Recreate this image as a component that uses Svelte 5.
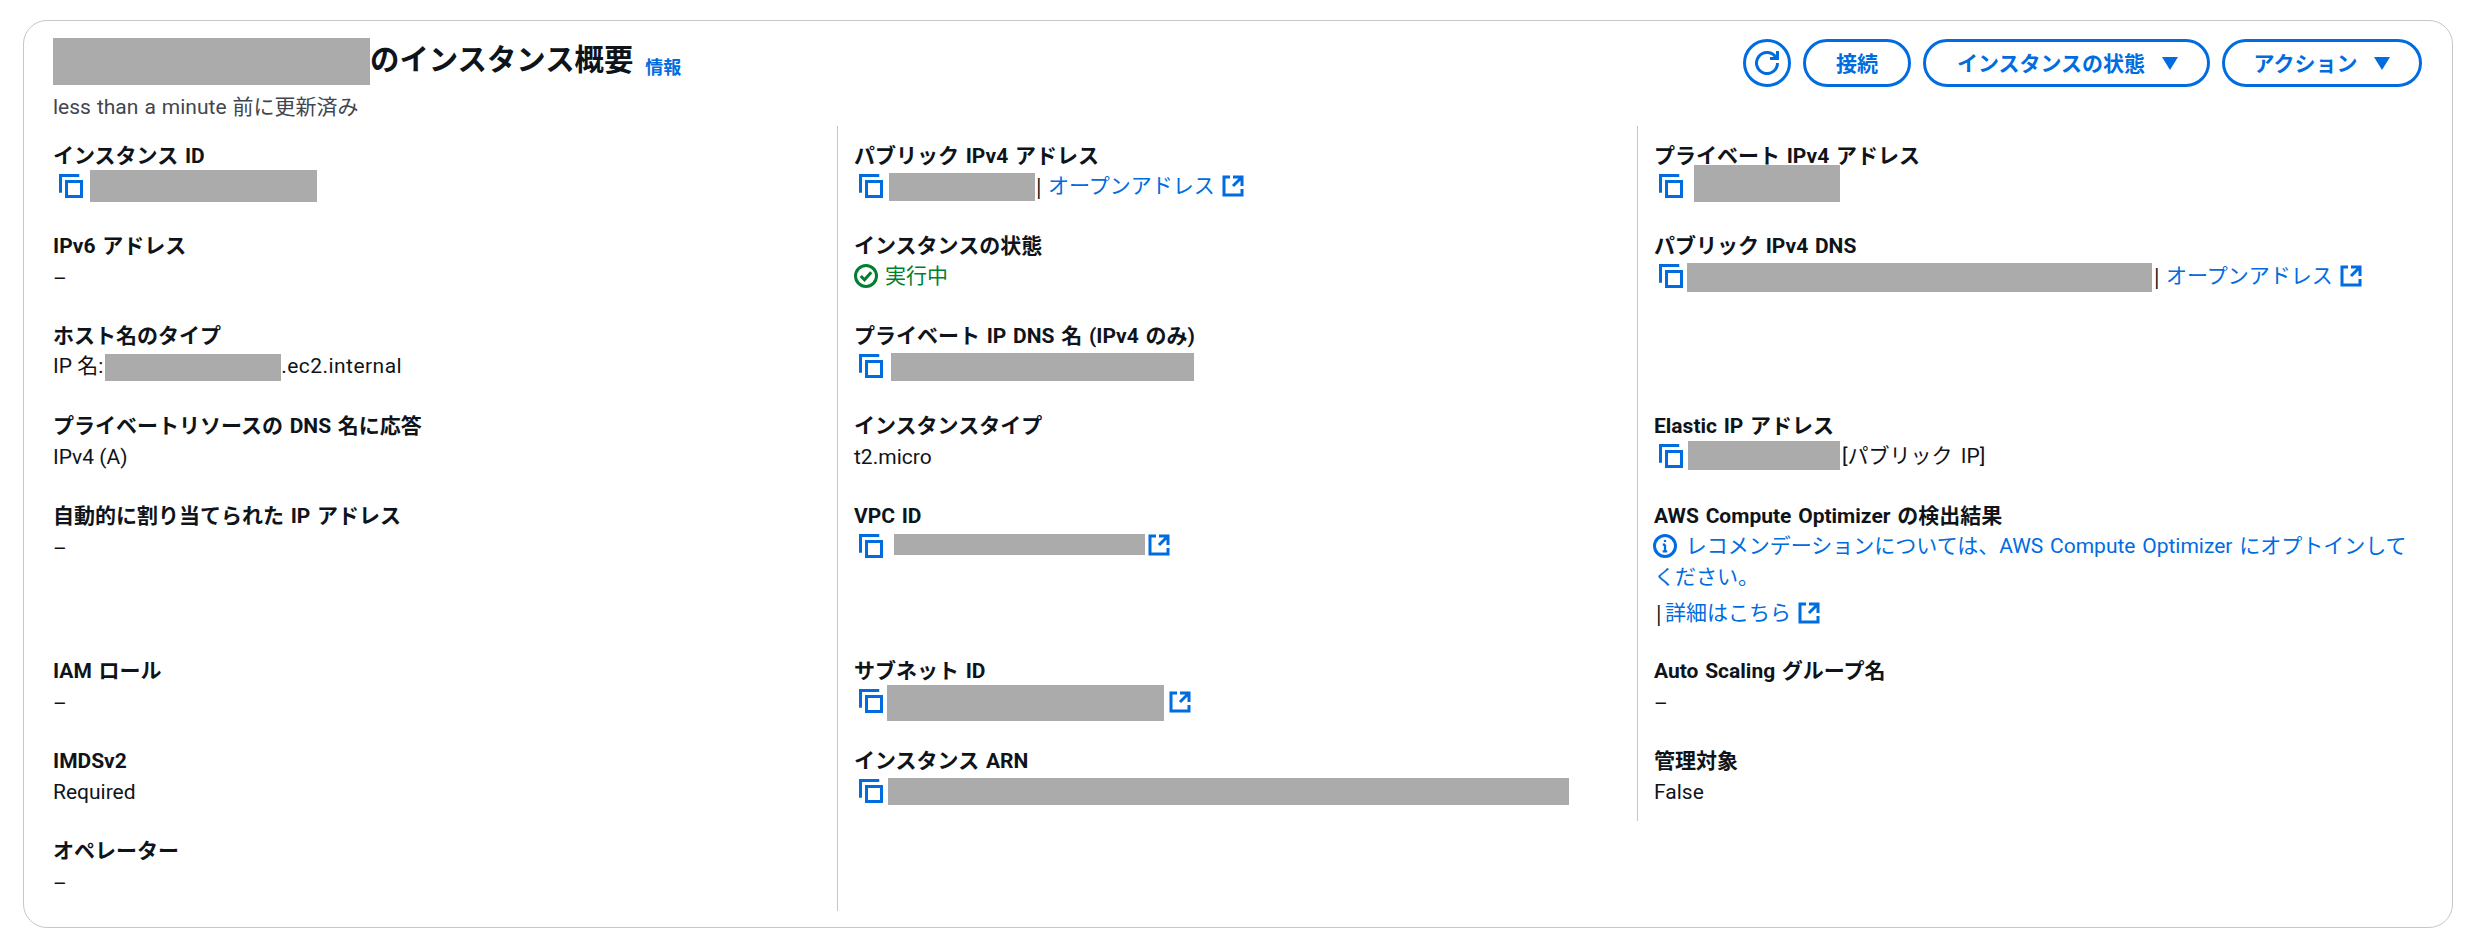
<script lang="ts">
  const actions = [
    { label: '接続', cls: 'connect', caret: false },
    { label: 'インスタンスの状態', cls: 'state', caret: true },
    { label: 'アクション', cls: 'action', caret: true },
  ]
</script>

{#snippet copy(left = 6)}
  <svg class="icon" style:margin-left="{left}px" viewBox="0 0 16 16" aria-hidden="true">
    <path d="M1 12.5V1h12.5" />
    <rect x="5" y="5" width="10" height="10" />
  </svg>
{/snippet}

{#snippet external(left = 0, top = 0)}
  <svg class="icon" style:margin-left="{left}px" style:margin-top="{top}px" viewBox="0 0 16 16" aria-hidden="true">
    <path d="M14 8V2H8M14 2 8 8M6 2H2v12h12v-4" />
  </svg>
{/snippet}

{#snippet redact(width: number, height: number, left = 0, top = 0)}
  <span class="redact" style:width="{width}px" style:height="{height}px" style:margin-left="{left}px" style:margin-top="{top}px"></span>
{/snippet}

<div class="page">
  <section class="card">
    <header class="head">
      <div class="head-main">
        <div class="title-row">
          {@render redact(317, 47)}
          <h2>のインスタンス概要</h2>
          <a class="info" href="#info">情報</a>
        </div>
        <div class="updated">less than a minute 前に更新済み</div>
      </div>
      <div class="actions">
        <button class="btn refresh" aria-label="更新">
          <svg class="icon" viewBox="0 0 16 16" aria-hidden="true">
            <path d="M10 5h5V0" />
            <path d="M15 8A7 7 0 1 1 14.06 4.5" />
          </svg>
        </button>
        {#each actions as a}
          <button class="btn {a.cls}">
            <span class="btn-text">{a.label}</span>
            {#if a.caret}
              <svg class="caret" viewBox="0 0 16 13" aria-hidden="true"><path d="M0 0h16L8 13z" /></svg>
            {/if}
          </button>
        {/each}
      </div>
    </header>

    <div class="cols">
      <div class="col">
        <div class="item">
          <div class="label">インスタンス ID</div>
          <div class="value">{@render copy()}{@render redact(227, 32, 7)}</div>
        </div>
        <div class="item">
          <div class="label">IPv6 アドレス</div>
          <div class="value dash">–</div>
        </div>
        <div class="item">
          <div class="label">ホスト名のタイプ</div>
          <div class="value">IP 名:{@render redact(176, 27, 2, 3)}<span class="latin">.ec2.internal</span></div>
        </div>
        <div class="item">
          <div class="label">プライベートリソースの DNS 名に応答</div>
          <div class="value plain">IPv4 (A)</div>
        </div>
        <div class="item tall">
          <div class="label">自動的に割り当てられた IP アドレス</div>
          <div class="value dash">–</div>
        </div>
        <div class="item">
          <div class="label">IAM ロール</div>
          <div class="value dash">–</div>
        </div>
        <div class="item">
          <div class="label">IMDSv2</div>
          <div class="value plain">Required</div>
        </div>
        <div class="item">
          <div class="label">オペレーター</div>
          <div class="value dash">–</div>
        </div>
      </div>

      <div class="col ruled">
        <div class="item">
          <div class="label">パブリック IPv4 アドレス</div>
          <div class="value">
            {@render copy(5)}{@render redact(146, 28, 6, 2)}<span class="pipe">|</span>
            <a class="link" href="#open">オープンアドレス</a>{@render external(6)}
          </div>
        </div>
        <div class="item">
          <div class="label">インスタンスの状態</div>
          <div class="value running">
            <svg class="icon" viewBox="0 0 16 16" aria-hidden="true">
              <circle cx="8" cy="8" r="7" />
              <path d="m4.5 8 2.5 2.5 4.5-5" />
            </svg>
            <span class="running-text">実行中</span>
          </div>
        </div>
        <div class="item">
          <div class="label">プライベート IP DNS 名 (IPv4 のみ)</div>
          <div class="value">{@render copy(5)}{@render redact(303, 28, 8, 2)}</div>
        </div>
        <div class="item">
          <div class="label">インスタンスタイプ</div>
          <div class="value plain">t2.micro</div>
        </div>
        <div class="item tall">
          <div class="label">VPC ID</div>
          <div class="value">{@render copy(5)}{@render redact(251, 21, 11, -3)}{@render external(2, -2)}</div>
        </div>
        <div class="item">
          <div class="label">サブネット ID</div>
          <div class="value">{@render copy(5)}{@render redact(277, 36, 4, 4)}{@render external(4, 2)}</div>
        </div>
        <div class="item">
          <div class="label">インスタンス ARN</div>
          <div class="value">{@render copy(5)}{@render redact(681, 27, 5, 1)}</div>
        </div>
      </div>

      <div class="col ruled short">
        <div class="item">
          <div class="label">プライベート IPv4 アドレス</div>
          <div class="value">{@render copy(5)}{@render redact(146, 37, 11, -5)}</div>
        </div>
        <div class="item double">
          <div class="label">パブリック IPv4 DNS</div>
          <div class="value">
            {@render copy(5)}{@render redact(465, 29, 4, 3)}<span class="pipe wide">|</span>
            <a class="link" href="#open">オープンアドレス</a>{@render external(6)}
          </div>
        </div>
        <div class="item">
          <div class="label">Elastic IP アドレス</div>
          <div class="value">{@render copy(5)}{@render redact(152, 29, 5, -1)}<span class="suffix">[パブリック IP]</span></div>
        </div>
        <div class="item tall">
          <div class="label">AWS Compute Optimizer の検出結果</div>
          <a class="notice" href="#optimizer">
            <svg class="icon info-icon" viewBox="0 0 16 16" aria-hidden="true">
              <circle cx="8" cy="8" r="7" />
              <path class="thin" d="M8 11.5V7M6.5 11.5h3M6.5 7H8M8 4v1.4" />
            </svg>
            レコメンデーションについては、AWS Compute Optimizer にオプトインしてください。
          </a>
          <div class="value more">
            <span class="pipe first">|</span>
            <a class="link" href="#more">詳細はこちら</a>{@render external(6)}
          </div>
        </div>
        <div class="item">
          <div class="label">Auto Scaling グループ名</div>
          <div class="value dash">–</div>
        </div>
        <div class="item">
          <div class="label">管理対象</div>
          <div class="value plain">False</div>
        </div>
      </div>
    </div>
  </section>
</div>

<style>
  :global(body) {
    margin: 0;
    background: #fff;
    font-family: Roboto, 'Noto Sans CJK JP', sans-serif;
    font-size: 21px;
    color: #0f141a;
  }

  .page {
    padding: 20px 33px 0 23px;
  }

  .card {
    box-sizing: border-box;
    height: 908px;
    border: 1px solid #c6c6cd;
    border-radius: 24px;
    padding: 0 15px 0 13px;
  }

  .head {
    display: flex;
    justify-content: space-between;
    height: 105px;
    padding: 0 15px 0 16px;
  }

  .head-main {
    padding-top: 17px;
  }

  .title-row {
    display: flex;
    align-items: center;
    height: 47px;
  }

  h2 {
    margin: 0 0 3px;
    font-size: 29.4px;
    font-weight: 700;
    line-height: 44px;
  }

  .info {
    margin: 9px 0 0 12px;
    font-size: 18px;
    font-weight: 700;
    color: #006ce0;
    text-decoration: none;
  }

  .updated {
    margin-top: 8px;
    line-height: 28px;
    word-spacing: 0.8px;
    color: #424650;
  }

  .actions {
    display: flex;
    gap: 12px;
    padding-top: 18px;
  }

  .btn {
    box-sizing: border-box;
    display: flex;
    align-items: center;
    justify-content: center;
    height: 48px;
    padding: 0;
    border: 3px solid #006ce0;
    border-radius: 24px;
    background: #fff;
    color: #006ce0;
    font: 700 21px Roboto, 'Noto Sans CJK JP', sans-serif;
  }

  .btn-text {
    margin-bottom: 3px;
  }

  .refresh {
    width: 48px;
  }

  .connect {
    width: 108px;
  }

  .state {
    width: 287px;
    padding-left: 2px;
  }

  .action {
    width: 200px;
  }

  .caret {
    width: 16px;
    height: 13px;
    margin-left: 17px;
    fill: #006ce0;
  }

  .cols {
    display: grid;
    grid-template-columns: repeat(3, 1fr);
    align-items: stretch;
  }

  .col {
    padding-left: 16px;
  }

  .ruled {
    border-left: 1px solid #c6c6cd;
  }

  .short {
    align-self: start;
  }

  .item {
    box-sizing: border-box;
    height: 90px;
    padding-top: 15px;
  }

  .tall {
    height: 155px;
  }

  .double {
    height: 180px;
  }

  .label {
    font-weight: 700;
    line-height: 30px;
    word-spacing: 1.5px;
    white-space: nowrap;
  }

  .value {
    display: flex;
    align-items: center;
    height: 30px;
    line-height: 30px;
    white-space: nowrap;
  }

  .plain {
    padding-top: 1px;
  }

  .dash {
    padding-top: 3px;
  }

  .latin {
    letter-spacing: 0.45px;
  }

  .redact {
    display: block;
    flex: none;
    background: #ababab;
  }

  .icon {
    flex: none;
    width: 24px;
    height: 24px;
    fill: none;
    stroke: #006ce0;
    stroke-width: 2;
  }

  .pipe {
    width: 11px;
    margin: 0 4px 0 -2px;
    font-family: 'Noto Sans', sans-serif;
  }

  .pipe.wide {
    margin-left: -1px;
  }

  .pipe.first {
    margin: 0 1px 0 -1px;
  }

  .link,
  .notice {
    color: #006ce0;
    text-decoration: none;
  }

  .running {
    color: #00802f;
  }

  .running .icon {
    stroke: #00802f;
  }

  .running-text {
    margin-left: 7px;
  }

  .notice {
    display: block;
    line-height: 31px;
    margin-right: 20px;
    word-spacing: 1.5px;
  }

  .info-icon {
    vertical-align: -5px;
    margin: 0 2px 0 -1px;
  }

  .thin {
    stroke-width: 1.5;
  }

  .more {
    margin-top: 5px;
  }

  .suffix {
    margin-left: 2px;
    word-spacing: 3px;
  }
</style>
